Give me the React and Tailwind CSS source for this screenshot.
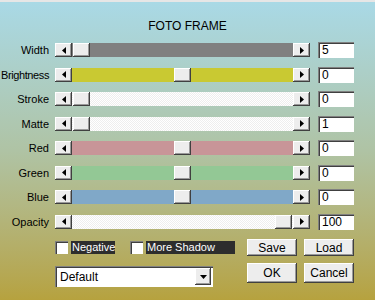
const raised =
  "bg-[#ededed] shadow-[inset_-1px_-1px_#404040,inset_1px_1px_#ffffff,inset_-2px_-2px_#9a9a9a]";
const sunken =
  "bg-white shadow-[inset_1px_1px_#808080,inset_2px_2px_#404040,inset_-1px_-1px_#ffffff]";
const dither =
  "bg-[repeating-conic-gradient(#eeeeee_0%_25%,#ffffff_0%_50%)] bg-[length:2px_2px]";

const rows = [
  { label: "Width", value: "5", track: "bg-[#808080]", pos: "justify-start" },
  { label: "Brightness", value: "0", track: "bg-[#c9c932]", pos: "justify-center" },
  { label: "Stroke", value: "0", track: dither, pos: "justify-start" },
  { label: "Matte", value: "1", track: dither, pos: "justify-start" },
  { label: "Red", value: "0", track: "bg-[#c89598]", pos: "justify-center" },
  { label: "Green", value: "0", track: "bg-[#93c895]", pos: "justify-center" },
  { label: "Blue", value: "0", track: "bg-[#80a8c8]", pos: "justify-center" },
  { label: "Opacity", value: "100", track: dither, pos: "justify-end" },
];

const ArrowBtn = ({ dir }) => (
  <div className={`w-[17px] h-[14px] flex items-center justify-center ${raised}`}>
    <svg width="4" height="7" viewBox="0 0 4 7">
      {dir === "left" ? (
        <path d="M4 0 L0 3.5 L4 7 Z" fill="#000" />
      ) : (
        <path d="M0 0 L4 3.5 L0 7 Z" fill="#000" />
      )}
    </svg>
  </div>
);

const SliderRow = ({ label, value, track, pos }) => (
  <div className="flex items-center h-[24.5px]">
    <div className="w-[49px] flex justify-end text-[11px] text-black whitespace-nowrap">
      <span className={label === "Brightness" ? "tracking-[-0.4px]" : ""}>{label}</span>
    </div>
    <div className="ml-[6px] flex w-[255px]">
      <ArrowBtn dir="left" />
      <div className={`flex-1 h-[14px] flex px-[1px] ${track} ${pos}`}>
        <div className={`w-[17px] h-[14px] ${raised}`} />
      </div>
      <ArrowBtn dir="right" />
    </div>
    <div className={`ml-[8px] w-[36px] h-[16px] pl-[4px] text-[12px] leading-[16px] text-black ${sunken}`}>
      {value}
    </div>
  </div>
);

const Checkbox = ({ label, width }) => (
  <div className="flex items-center">
    <div className={`w-[13px] h-[13px] ${sunken}`} />
    <div
      className={`ml-[3px] h-[13px] bg-[#2d2d2d] text-white text-[11px] leading-[13px] px-[1px] ${width}`}
    >
      {label}
    </div>
  </div>
);

const Button = ({ children, h }) => (
  <div
    className={`w-[50px] ${h} flex items-center justify-center text-[12px] text-black ${raised}`}
  >
    {children}
  </div>
);

export default function App() {
  return (
    <div
      className="w-[375px] h-[300px] overflow-hidden border-t-2 border-[#e6e6e6] bg-linear-to-b from-[#a9d9e6] via-[#afc3a4] to-[#b6a23e]"
      style={{ fontFamily: '"Liberation Sans", Arial, sans-serif' }}
    >
      <div className="h-[36px] pt-[17px] text-center text-[12px] leading-[14px] text-black">
        FOTO FRAME
      </div>

      <div className="flex flex-col">
        {rows.map((r) => (
          <SliderRow key={r.label} {...r} />
        ))}
      </div>

      <div className="pl-[55px] mt-[5px] flex items-center h-[17px]">
        <div className="w-[192px] flex items-center gap-[15px]">
          <Checkbox label="Negative" width="w-[44px]" />
          <Checkbox label="More Shadow" width="w-[89px]" />
        </div>
        <Button h="h-[17px]">Save</Button>
        <div className="w-[7px]" />
        <Button h="h-[17px]">Load</Button>
      </div>

      <div className="pl-[55px] mt-[7px] flex items-start">
        <div className="w-[192px]">
          <div className={`mt-[3px] w-[158px] h-[21px] flex items-center p-[2px] ${sunken}`}>
            <div className="flex-1 pl-[3px] text-[12px] text-black">Default</div>
            <div className={`w-[16px] h-[17px] flex items-center justify-center ${raised}`}>
              <svg width="7" height="4" viewBox="0 0 7 4">
                <path d="M0 0 L7 0 L3.5 4 Z" fill="#000" />
              </svg>
            </div>
          </div>
        </div>
        <Button h="h-[20px]">OK</Button>
        <div className="w-[7px]" />
        <Button h="h-[20px]">Cancel</Button>
      </div>
    </div>
  );
}
